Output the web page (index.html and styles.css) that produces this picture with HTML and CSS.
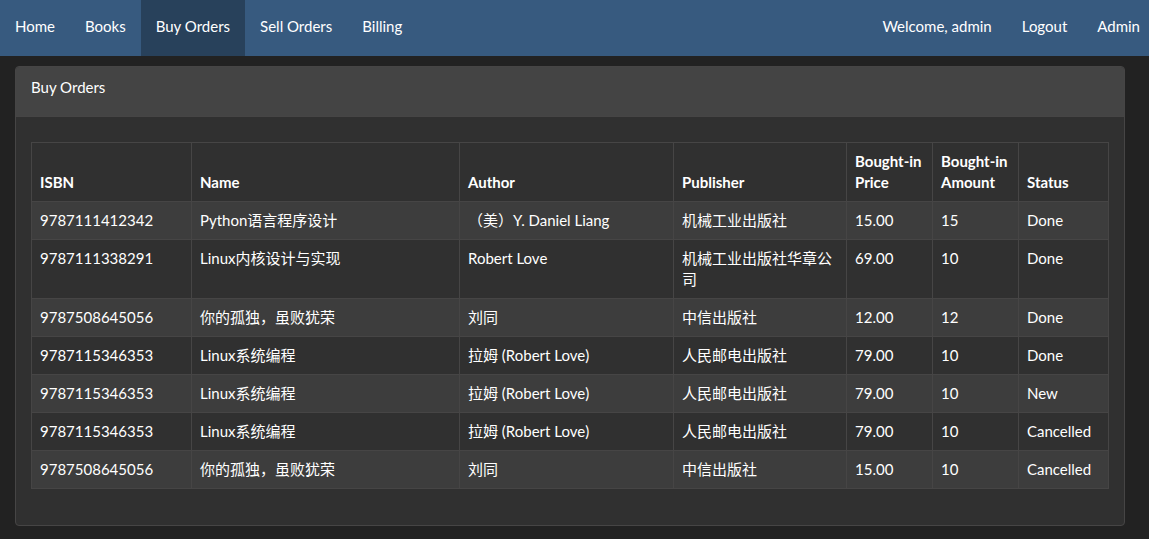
FILE: index.html
```html
<!DOCTYPE html>
<html lang="en">
<head>
<meta charset="utf-8">
<title>Buy Orders</title>
<link rel="stylesheet" href="styles.css">
</head>
<body>
<nav class="navbar">
  <ul class="nav">
    <li><a href="#">Home</a></li>
    <li><a href="#">Books</a></li>
    <li class="active"><a href="#">Buy Orders</a></li>
    <li><a href="#">Sell Orders</a></li>
    <li><a href="#">Billing</a></li>
  </ul>
  <ul class="nav nav-right">
    <li><a href="#">Welcome, admin</a></li>
    <li><a href="#">Logout</a></li>
    <li><a href="#">Admin</a></li>
  </ul>
</nav>
<div class="container">
  <div class="panel">
    <div class="panel-heading">Buy Orders</div>
    <div class="panel-body">
      <table class="table">
        <colgroup>
          <col class="c-isbn"><col class="c-name"><col class="c-author"><col class="c-pub"><col class="c-price"><col class="c-amount"><col class="c-status">
        </colgroup>
        <thead>
          <tr><th>ISBN</th><th>Name</th><th>Author</th><th>Publisher</th><th>Bought-in Price</th><th>Bought-in Amount</th><th>Status</th></tr>
        </thead>
        <tbody>
          <tr><td>9787111412342</td><td>Python语言程序设计</td><td>（美）Y. Daniel Liang</td><td>机械工业出版社</td><td>15.00</td><td>15</td><td>Done</td></tr>
          <tr><td>9787111338291</td><td>Linux内核设计与实现</td><td>Robert Love</td><td>机械工业出版社华章公司</td><td>69.00</td><td>10</td><td>Done</td></tr>
          <tr><td>9787508645056</td><td>你的孤独，虽败犹荣</td><td>刘同</td><td>中信出版社</td><td>12.00</td><td>12</td><td>Done</td></tr>
          <tr><td>9787115346353</td><td>Linux系统编程</td><td>拉姆 (Robert Love)</td><td>人民邮电出版社</td><td>79.00</td><td>10</td><td>Done</td></tr>
          <tr><td>9787115346353</td><td>Linux系统编程</td><td>拉姆 (Robert Love)</td><td>人民邮电出版社</td><td>79.00</td><td>10</td><td>New</td></tr>
          <tr><td>9787115346353</td><td>Linux系统编程</td><td>拉姆 (Robert Love)</td><td>人民邮电出版社</td><td>79.00</td><td>10</td><td>Cancelled</td></tr>
          <tr><td>9787508645056</td><td>你的孤独，虽败犹荣</td><td>刘同</td><td>中信出版社</td><td>15.00</td><td>10</td><td>Cancelled</td></tr>
        </tbody>
      </table>
    </div>
  </div>
</div>
</body>
</html>
```
FILE: styles.css
```css
* { box-sizing: border-box; }
html, body { margin: 0; padding: 0; }
body {
  background: #222222;
  color: #ffffff;
  font-family: Lato, "Noto Sans CJK SC", sans-serif;
  font-size: 15px;
  line-height: 21px;
}
.navbar {
  display: flex;
  justify-content: space-between;
  background: #375a7f;
  height: 56px;
  margin-bottom: 10px;
}
.nav {
  display: flex;
  list-style: none;
  margin: 0;
  padding: 0;
}
.nav li a {
  display: block;
  height: 56px;
  padding: 16px 15px 19px;
  color: #ffffff;
  text-decoration: none;
}
.nav li.active a { background: #28415b; }
.nav-right { margin-right: -6px; }
.container {
  width: 1140px;
  padding: 0 15px;
}
.panel {
  background: #303030;
  border: 1px solid #464545;
  border-radius: 4px;
  overflow: hidden;
}
.panel-heading {
  background: #444444;
  padding: 10px 15px;
  height: 50px;
  border-bottom: 1px solid #464545;
  line-height: 21px;
}
.panel-body { padding: 25px 15px 36px; }
.table {
  width: 100%;
  border-collapse: collapse;
  table-layout: fixed;
}
.c-isbn { width: 160px; }
.c-name { width: 268px; }
.c-author { width: 214px; }
.c-pub { width: 173px; }
.c-price { width: 86px; }
.c-amount { width: 86px; }
.c-status { width: 90px; }
.table th, .table td {
  border: 1px solid #464545;
  padding: 8px;
  text-align: left;
  vertical-align: top;
  line-height: 21px;
}
.table th {
  font-weight: bold;
  vertical-align: bottom;
}
.table tbody tr:nth-child(odd) { background: #3d3d3d; }
```
